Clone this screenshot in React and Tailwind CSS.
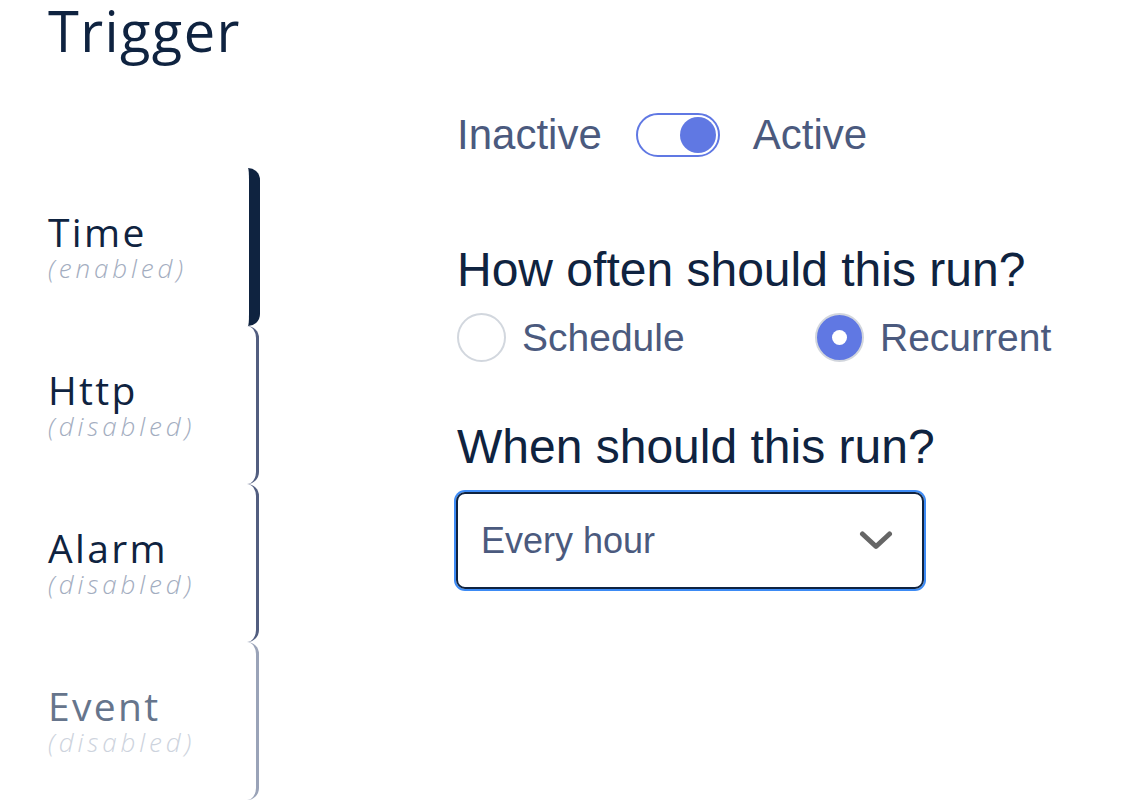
import React from 'react';

const tabs = [
  { name: 'Time', state: 'enabled', active: true },
  { name: 'Http', state: 'disabled' },
  { name: 'Alarm', state: 'disabled' },
  { name: 'Event', state: 'disabled', muted: true },
];

const Tab = ({ name, state, active, muted }) => {
  const bar = active
    ? 'border-r-[11px] border-[#0f2340] w-[260px]'
    : muted
      ? 'border-r-[3px] border-[#9aa3b8] w-[259px]'
      : 'border-r-[3px] border-[#525e80] w-[259px]';
  return (
    <div className={`h-[158px] flex flex-col justify-center pl-12 rounded-r-[12px] ${bar}`}>
      <span
        className={`text-[39px] leading-[42px] tracking-[0.06em] ${muted ? 'text-[#66758c]' : 'text-[#0f2340]'}`}
      >
        {name}
      </span>
      <span
        className={`text-[26px] leading-[30px] italic font-light tracking-[0.15em] ${muted ? 'text-[#cdd3dd]' : 'text-[#a3adc0]'}`}
      >
        ({state})
      </span>
    </div>
  );
};

const App = () => {
  return (
    <div className="w-[1132px] h-[812px] bg-white overflow-hidden">
      <h1
        className="pl-12 text-[56px] leading-[60px] font-normal tracking-[0.025em] text-[#0f2340]"
        style={{ fontFamily: '"Open Sans", sans-serif' }}
      >
        Trigger
      </h1>
      <div className="flex items-start -mt-[3px]">
        <nav className="pt-[111px]" style={{ fontFamily: '"Open Sans", sans-serif' }}>
          {tabs.map((t) => (
            <Tab key={t.name} {...t} />
          ))}
        </nav>
        <main
          className="pt-[56px] pl-[197px] text-[#4b5a7e]"
          style={{ fontFamily: '"Liberation Sans", Arial, sans-serif' }}
        >
          <div className="flex items-center h-[44px]">
            <span className="text-[42px] leading-none">Inactive</span>
            <div className="ml-[34px] w-[84px] h-[44px] rounded-full border-2 border-[#6078e3] bg-white flex items-center justify-end pr-[2px]">
              <div className="w-[36px] h-[36px] rounded-full bg-[#6078e3]" />
            </div>
            <span className="ml-[33px] text-[42px] leading-none">Active</span>
          </div>

          <h2 className="mt-[89px] text-[48px] leading-none text-[#0f2340]">How often should this run?</h2>
          <div className="mt-[19px] flex items-center h-[49px]">
            <label className="w-[358px] flex items-center">
              <span className="w-[49px] h-[49px] rounded-full border-2 border-[#d2d7de] bg-white" />
              <span className="ml-[16px] text-[39px] leading-none">Schedule</span>
            </label>
            <label className="flex items-center">
              <span className="w-[49px] h-[49px] rounded-full border-2 border-[#d2d6dd] bg-[#6078e3] flex items-center justify-center">
                <span className="w-[15px] h-[15px] rounded-full bg-white" />
              </span>
              <span className="ml-[16px] text-[39px] leading-none">Recurrent</span>
            </label>
          </div>

          <h2 className="mt-[61px] text-[48px] leading-none text-[#0f2340]">When should this run?</h2>
          <div className="mt-[21px] -ml-px w-[468px] h-[97px] rounded-[9px] border-2 border-[#0f2340] ring-2 ring-[#3d8bf5] flex items-center justify-between pl-[23px] pr-[29px]">
            <span className="text-[36px] leading-none">Every hour</span>
            <svg width="34" height="21" viewBox="0 0 34 21" fill="none">
              <polyline
                points="3.5,4 17,16.5 30.5,4"
                stroke="#666666"
                strokeWidth="5"
                strokeLinecap="round"
                strokeLinejoin="round"
              />
            </svg>
          </div>
        </main>
      </div>
    </div>
  );
};

export default App;
